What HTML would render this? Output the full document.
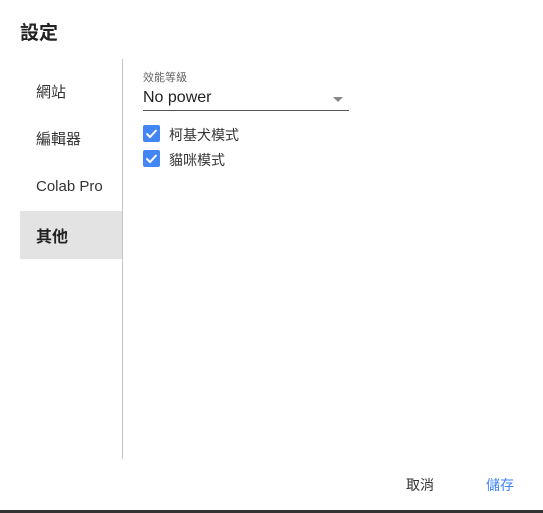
<!DOCTYPE html><html><head><style>
body{margin:0;width:543px;height:513px;background:#fff;position:relative;overflow:hidden;font-family:"Liberation Sans","Noto Sans CJK TC",sans-serif;color:#212121}
div{position:absolute}
.n{left:36px;font-size:15px;color:#333}
.cb{width:17px;height:17px;background:#4285f4;border-radius:2px;left:143px}
.cb svg{position:absolute;left:0;top:0}
.l{left:169px;font-size:14px;color:#333}
</style></head><body>
<div style="left:20px;top:18px;font-size:19px;font-weight:bold;color:#222">設定</div>
<div style="left:20px;top:211px;width:102px;height:48px;background:#e3e3e3"></div>
<div style="left:122px;top:59px;width:1px;height:400px;background:#c4c4c4"></div>
<div class="n" style="top:81px">網站</div>
<div class="n" style="top:128px">編輯器</div>
<div class="n" style="top:178px">Colab Pro</div>
<div class="n" style="top:223px;font-size:16px;font-weight:bold;color:#222">其他</div>
<div style="left:143px;top:69px;font-size:11px;color:#666">效能等級</div>
<div style="left:143px;top:89px;font-size:16px;color:#222">No power</div>
<div style="left:333px;top:97px;width:0;height:0;border-left:5px solid transparent;border-right:5px solid transparent;border-top:5px solid #888"></div>
<div style="left:143px;top:110px;width:206px;height:1px;background:#555"></div>
<div class="cb" style="top:125px"><svg width="17" height="17"><path d="M3.5 8.5l3.5 3.5 6.5-7" stroke="#fff" stroke-width="2" fill="none"/></svg></div>
<div class="l" style="top:125px">柯基犬模式</div>
<div class="cb" style="top:150px"><svg width="17" height="17"><path d="M3.5 8.5l3.5 3.5 6.5-7" stroke="#fff" stroke-width="2" fill="none"/></svg></div>
<div class="l" style="top:150px">貓咪模式</div>
<div style="left:406px;top:475px;font-size:14px;color:#333">取消</div>
<div style="left:486px;top:475px;font-size:14px;color:#4285f4">儲存</div>
<div style="left:0;top:510px;width:543px;height:3px;background:#333"></div>
</body></html>
